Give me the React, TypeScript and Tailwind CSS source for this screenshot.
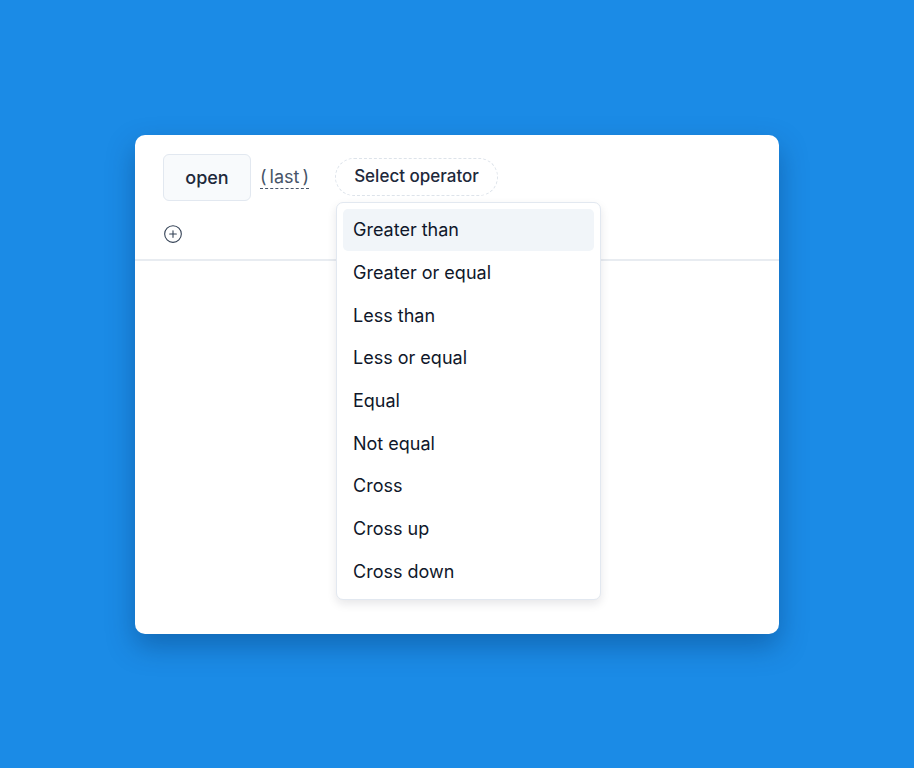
import { CirclePlus } from "lucide-react";

const OPERATORS = [
  "Greater than",
  "Greater or equal",
  "Less than",
  "Less or equal",
  "Equal",
  "Not equal",
  "Cross",
  "Cross up",
  "Cross down",
];

export default function App() {
  return (
    <div
      className="w-full h-[768px] bg-[#1b8be6] flex items-center justify-center"
      style={{ fontFamily: "Inter, 'Noto Sans', sans-serif" }}
    >
      <div className="relative w-[644px] h-[499px] bg-white rounded-[10px] shadow-[0_12px_28px_rgba(0,40,90,0.35)]">
        <div className="px-[28px] pt-[19px] h-[126px] border-b-2 border-[#e8ecf1]">
          <div className="flex items-center h-[47px]">
            <div className="w-[88px] h-[47px] flex items-center justify-center rounded-[6px] bg-[#f8fafc] border border-[#e2e8f0] text-[18px] font-medium text-[#1e293b]">
              open
            </div>
            <span className="ml-[9px] flex text-[18px] text-[#475569] border-b border-dashed border-[#475569] leading-[23px]">
              <span>(</span>
              <span className="mx-[3px]">last</span>
              <span>)</span>
            </span>
            <div className="ml-[26px] h-[38px] w-[163px] flex items-center justify-center rounded-full border border-dashed border-[#dde3ea] text-[17px] font-medium text-[#1e293b]">
              Select operator
            </div>
          </div>
          <div className="mt-[23px] text-[#334155]">
            <CirclePlus size={20} strokeWidth={1.3} />
          </div>
        </div>

        <div className="absolute left-[201px] top-[67px] w-[265px] p-[6px] bg-white rounded-[7px] border border-[#e2e8f0] shadow-[0_4px_10px_rgba(15,23,42,0.10)]">
          {OPERATORS.map((op, i) => (
            <div
              key={op}
              className={
                "h-[42.7px] flex items-center px-[10px] rounded-[5px] text-[18px] text-[#0f172a] " +
                (i === 0 ? "bg-[#f1f5f9]" : "")
              }
            >
              {op}
            </div>
          ))}
        </div>
      </div>
    </div>
  );
}
